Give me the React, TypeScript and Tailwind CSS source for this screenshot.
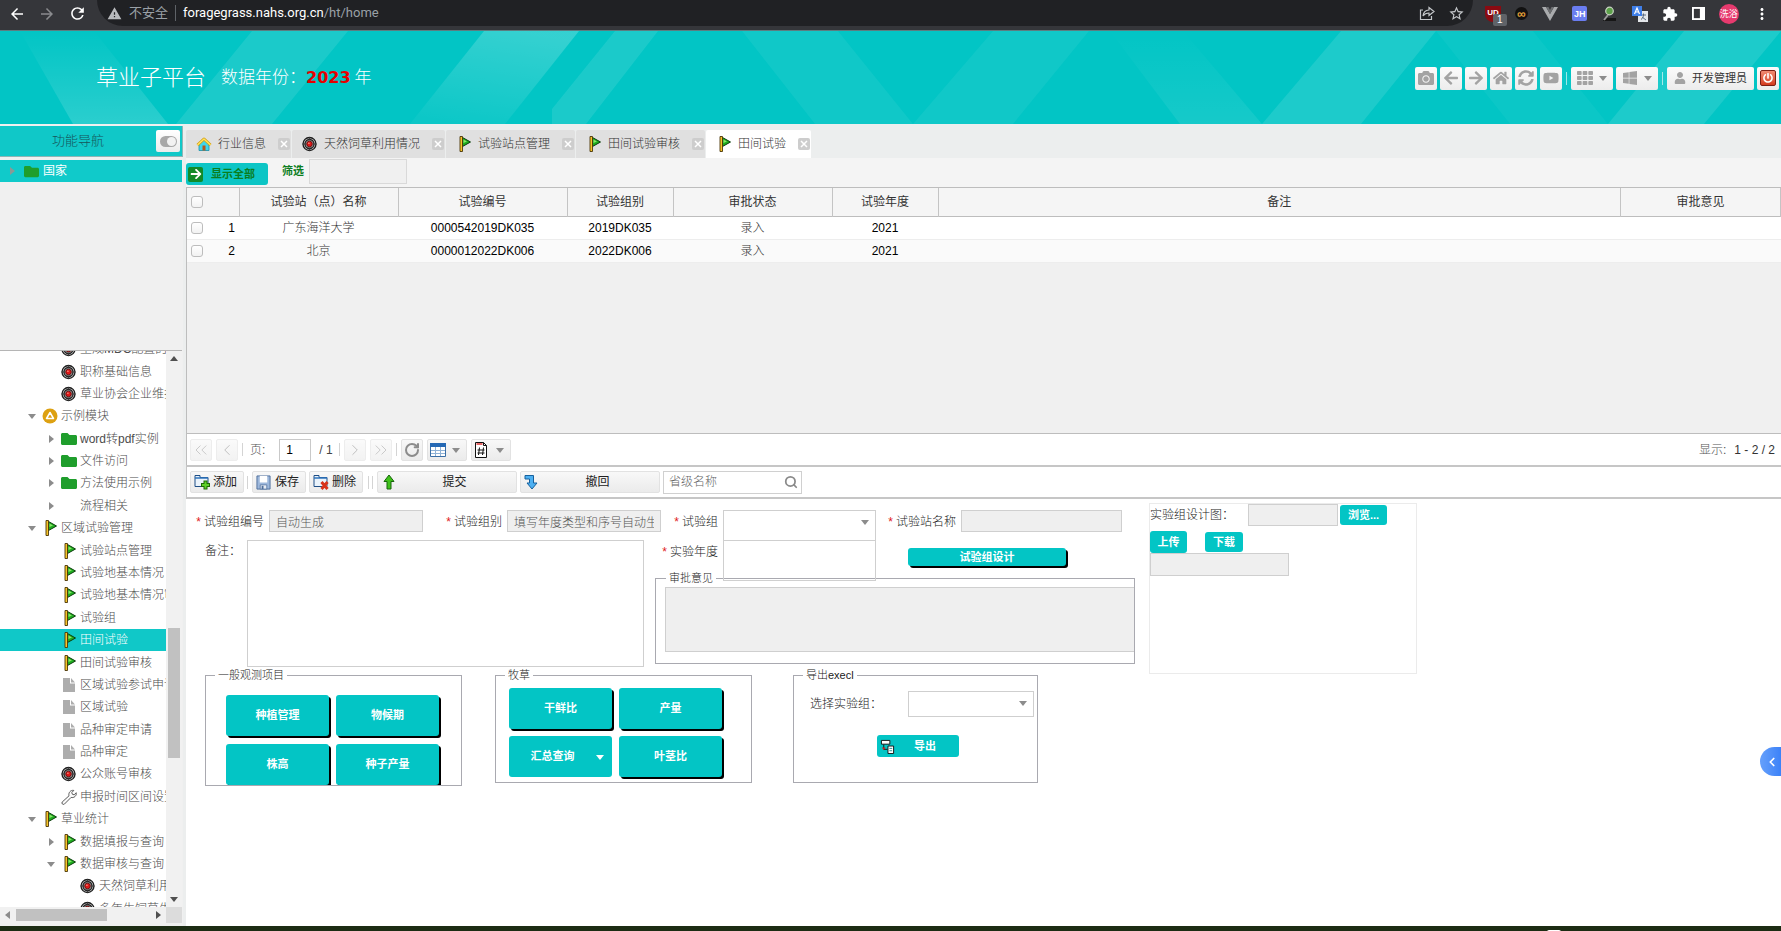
import type { ReactNode } from 'react';
import {
  FaArrowLeft,
  FaArrowRight,
  FaCamera,
  FaFolder,
  FaHome,
  FaPowerOff,
  FaSyncAlt,
  FaTh,
  FaUser,
  FaWindows,
  FaYoutube,
} from 'react-icons/fa';
import {
  MdArrowBack,
  MdArrowForward,
  MdExtension,
  MdMoreVert,
  MdRefresh,
  MdStarBorder,
  MdWarning,
} from 'react-icons/md';
import { ChevronLeft, ChevronRight, ChevronsLeft, ChevronsRight, RotateCw, Search } from 'lucide-react';

type IconName = 'flag' | 'target' | 'folder' | 'file' | 'wrench' | 'ring' | 'house' | 'none';

interface TreeNode {
  label: string;
  level: 1 | 2 | 3;
  icon: IconName;
  state?: 'open' | 'closed';
  active?: boolean;
}

const TREE: TreeNode[] = [
  { label: '生成MDC配置的', level: 2, icon: 'target' },
  { label: '职称基础信息', level: 2, icon: 'target' },
  { label: '草业协会企业维护', level: 2, icon: 'target' },
  { label: '示例模块', level: 1, icon: 'ring', state: 'open' },
  { label: 'word转pdf实例', level: 2, icon: 'folder', state: 'closed' },
  { label: '文件访问', level: 2, icon: 'folder', state: 'closed' },
  { label: '方法使用示例', level: 2, icon: 'folder', state: 'closed' },
  { label: '流程相关', level: 2, icon: 'none', state: 'closed' },
  { label: '区域试验管理', level: 1, icon: 'flag', state: 'open' },
  { label: '试验站点管理', level: 2, icon: 'flag' },
  { label: '试验地基本情况', level: 2, icon: 'flag' },
  { label: '试验地基本情况审核', level: 2, icon: 'flag' },
  { label: '试验组', level: 2, icon: 'flag' },
  { label: '田间试验', level: 2, icon: 'flag', active: true },
  { label: '田间试验审核', level: 2, icon: 'flag' },
  { label: '区域试验参试申请', level: 2, icon: 'file' },
  { label: '区域试验', level: 2, icon: 'file' },
  { label: '品种审定申请', level: 2, icon: 'file' },
  { label: '品种审定', level: 2, icon: 'file' },
  { label: '公众账号审核', level: 2, icon: 'target' },
  { label: '申报时间区间设置', level: 2, icon: 'wrench' },
  { label: '草业统计', level: 1, icon: 'flag', state: 'open' },
  { label: '数据填报与查询', level: 2, icon: 'flag', state: 'closed' },
  { label: '数据审核与查询', level: 2, icon: 'flag', state: 'open' },
  { label: '天然饲草利用情况', level: 3, icon: 'target' },
  { label: '多年生饲草生产', level: 3, icon: 'target' },
];

const INDENT = { 1: 'pl-[23px]', 2: 'pl-[42px]', 3: 'pl-[61px]' };

const TABS: { label: string; icon: IconName; active?: boolean }[] = [
  { label: '行业信息', icon: 'house' },
  { label: '天然饲草利用情况', icon: 'target' },
  { label: '试验站点管理', icon: 'flag' },
  { label: '田间试验审核', icon: 'flag' },
  { label: '田间试验', icon: 'flag', active: true },
];

const ROWS = [
  { name: '广东海洋大学', code: '0000542019DK035', group: '2019DK035', status: '录入', year: '2021' },
  { name: '北京', code: '0000012022DK006', group: '2022DK006', status: '录入', year: '2021' },
];

function Icon({ name }: { name: IconName }) {
  switch (name) {
    case 'flag':
      return (
        <svg viewBox="-2 0 16 16" className="size-4 shrink-0" aria-hidden>
          <path d="M4.500 1.500 12.500 6 4.500 10.500z" fill="#1fae1f" stroke="#0c3d0c" />
          <path d="M5.500 3.500 9 5.500 5.500 7z" fill="#8be36a" />
          <path d="M2 .5h2.500v15H2z" fill="#f7c52b" stroke="#4a3508" strokeWidth=".9" />
        </svg>
      );
    case 'target':
      return (
        <svg viewBox="0 0 16 16" className="size-4 shrink-0" fill="none" aria-hidden>
          <circle cx="7.500" cy="8" r="6.500" fill="#d0d0d0" stroke="#1c1c1c" strokeWidth="1.300" />
          <circle cx="7.500" cy="8" r="4.500" fill="#9c9c9c" stroke="#222" strokeWidth="1.300" />
          <circle cx="7.500" cy="8" r="2.800" fill="#e01818" stroke="#5a0808" strokeWidth=".8" />
          <path d="M7.500 1v3M7.500 12v3M.5 8h3M11.500 8h3" stroke="#333" strokeWidth=".8" />
          <circle cx="6.900" cy="7.200" r=".8" fill="#ff9c8c" />
        </svg>
      );
    case 'folder':
      return <FaFolder className="size-4 shrink-0 text-[#1f9e2c]" aria-hidden />;
    case 'file':
      return (
        <svg viewBox="0 0 16 16" className="size-4 shrink-0" aria-hidden>
          <path d="M2 1h7v5.500h5V15H2z" fill="#adadad" />
          <path d="M10 1l4 4.500h-4z" fill="#adadad" />
        </svg>
      );
    case 'wrench':
      return (
        <svg viewBox="0 0 16 16" className="size-4 shrink-0" fill="#fafafa" stroke="#5a5a5a" aria-hidden>
          <path d="M1.2 13 8 6.8C7.2 4 9.400 .8 12.800 1.400L10.800 3.600l.6 1.700 1.800.5 2-2.100c.7 3.100-2.300 5.600-5.100 4.700L3.300 15.200c-1.500.9-3-.8-2.100-2.200z" />
        </svg>
      );
    case 'ring':
      return (
        <svg viewBox="0 0 16 16" className="size-4 shrink-0" aria-hidden>
          <circle cx="8" cy="8" r="7.500" fill="#dda112" />
          <path d="M8 4.500 11.500 10.500h-7z" fill="none" stroke="#fff" strokeWidth="1.500" strokeLinejoin="round" />
        </svg>
      );
    case 'house':
      return (
        <svg viewBox="0 0 16 16" className="size-4 shrink-0" aria-hidden>
          <path d="M3 8v6.500h10V8L8 3.500z" fill="#3fd6ea" stroke="#1a8fa8" strokeWidth=".8" />
          <path d="M6.500 9.500h3v5h-3z" fill="#b5591c" />
          <path d="M1.500 9 8 3l6.500 6" fill="none" stroke="#d19a10" strokeWidth="3" strokeLinejoin="round" />
          <path d="M1.500 9 8 3l6.500 6" fill="none" stroke="#ffe45c" strokeWidth="1.600" strokeLinejoin="round" />
        </svg>
      );
    default:
      return <span className="size-4 shrink-0" />;
  }
}

function Caret({ dir = 'down', className = 'fill-[#8c8c8c]' }: { dir?: 'down' | 'right' | 'left' | 'up'; className?: string }) {
  const d = {
    down: 'M0 2h8L4 7z',
    up: 'M0 6h8L4 1z',
    right: 'M2 0v8l5-4z',
    left: 'M6 0v8L1 4z',
  }[dir];
  return (
    <svg viewBox="0 0 8 8" className={`size-2 shrink-0 ${className}`} aria-hidden>
      <path d={d} />
    </svg>
  );
}

function BrowserBar() {
  return (
    <div className="flex h-[31px] shrink-0 items-start border-b border-[#5c7d80] bg-[#35363a] text-white">
      <div className="flex h-[27px] w-[97px] shrink-0 items-center gap-3 pl-2">
        <MdArrowBack className="size-[18px]" />
        <MdArrowForward className="size-[18px] text-[#8a8b8e]" />
        <MdRefresh className="size-[19px]" />
      </div>
      <div className="flex h-[26px] flex-1 items-center rounded-b-full bg-[#202124] pr-2 pl-2.5 text-[13px]">
        <MdWarning className="size-[15px] text-[#b8babd]" />
        <span className="ml-[7px] text-[#9aa0a6]">不安全</span>
        <span className="mx-[7px] h-4 w-px bg-[#5f6368]" />
        <span className="font-['Roboto',sans-serif] text-[#9aa0a6]">
          <span className="text-white">foragegrass.nahs.org.cn</span>/ht/home
        </span>
        <svg viewBox="0 0 16 16" className="ml-auto size-4" fill="none" stroke="#c4c7ca" strokeWidth="1.200" aria-hidden>
          <path d="M4 5H1.500v9.500h11V11" />
          <path d="M4 11c.4-4 2.800-5.800 6-6V2.500L15 6.500l-5 4V8c-2.600 0-4.500.8-6 3z" />
        </svg>
        <MdStarBorder className="ml-[13px] size-[17px] text-[#c4c7ca]" />
      </div>
      <div className="flex h-[27px] w-[308px] shrink-0 items-center justify-between pr-2.5 pl-3">
        <span className="relative flex size-4 items-center justify-center rounded-b-full bg-[#8a0b12] text-[8px] font-bold">
          UD
          <span className="absolute top-2 left-2 rounded-xs bg-[#5f6368] px-1 text-[10px] leading-[12px] font-normal">1</span>
        </span>
        <span className="flex size-[13px] items-center justify-center rounded-full bg-[#111] text-[12px] leading-none font-bold text-[#e8a33a]">
          ∞
        </span>
        <svg viewBox="0 0 16 14" className="h-3.5 w-4" aria-hidden>
          <path d="M0 0h4l4 7 4-7h4L8 14z" fill="#a9abad" />
          <path d="M4 0h2.500L8 3l1.500-3H12L8 7z" fill="#6d6f72" />
        </svg>
        <span className="flex size-[15px] items-center justify-center rounded-xs bg-[#6a7df0] text-[9px] font-bold">JH</span>
        <svg viewBox="0 0 16 16" className="size-4" aria-hidden>
          <path d="M2 15c1-3 3-3 5-3h8v3z" fill="#161616" />
          <path d="m7 9-4 5" stroke="#9a9a9a" strokeWidth="2" />
          <circle cx="8.500" cy="5" r="3.800" fill="#5ca04a" stroke="#c9d4c4" strokeWidth="1.200" />
        </svg>
        <svg viewBox="0 0 16 16" className="size-4" aria-hidden>
          <path d="M6 5h10v11H6z" fill="#e4e7ea" />
          <path d="M9 9h5M11.500 7.500V9c0 2-1 3.500-2.500 4.500M10 11l4 3" stroke="#5a6b80" fill="none" />
          <path d="M0 0h10v10H0z" fill="#3f7fe8" />
          <path d="m2.500 8 2.500-6 2.500 6M3.500 6h3" stroke="#fff" strokeWidth="1.200" fill="none" />
        </svg>
        <MdExtension className="size-4" />
        <svg viewBox="0 0 14 14" className="size-[13px]" aria-hidden>
          <path d="M0 0h14v14H0z" fill="#fff" />
          <path d="M2 2h6.500v10H2z" fill="#35363a" />
        </svg>
        <span className="flex size-5 items-center justify-center rounded-full bg-[#e63a6e] text-[9px]">洗浴</span>
        <MdMoreVert className="size-[18px]" />
      </div>
    </div>
  );
}

function HeaderArt() {
  return (
    <svg viewBox="0 0 1781 93" preserveAspectRatio="none" className="absolute inset-0 size-full" fill="#fff" aria-hidden>
      <defs>
        <linearGradient id="fadeUp" x1="0" y1="1" x2="0" y2="0">
          <stop offset="0" stopColor="#fff" stopOpacity=".16" />
          <stop offset="1" stopColor="#fff" stopOpacity="0" />
        </linearGradient>
        <linearGradient id="fadeDown" x1=".6" y1="0" x2=".3" y2="1">
          <stop offset="0" stopColor="#fff" stopOpacity=".2" />
          <stop offset="1" stopColor="#fff" stopOpacity=".04" />
        </linearGradient>
      </defs>
      <path d="M20 0h74l74 93H73z" fill="url(#fadeUp)" />
      <path d="M252 0h96l-76 93h-96z" fillOpacity=".1" />
      <path d="M484 0h95l-74 93h-95z" fill="url(#fadeDown)" />
      <path d="M615 0h43l-72 93h-34V78z" fillOpacity=".1" />
      <path d="M742 0h96l75 93h-98z" fillOpacity=".06" />
      <path d="M993 0h96l-76 93H913z" fillOpacity=".06" />
      <path d="M1110 0h73l79 93h-82z" fill="url(#fadeUp)" fillOpacity=".5" />
      <path d="M1341 0h95l-75 93h-99z" fillOpacity=".11" />
      <path d="M1436 0h97l75 93h-98z" fillOpacity=".04" />
      <path d="M1684 0h97l-77 93h-96z" fillOpacity=".11" />
    </svg>
  );
}

const headBtn =
  'flex h-[23px] items-center justify-center rounded-xs bg-linear-to-b from-[#fbfbfb] to-[#ececec] text-[#a3a3a3]';

function Header() {
  const plain = [
    { icon: <FaCamera />, label: '截图' },
    { icon: <FaArrowLeft />, label: '后退' },
    { icon: <FaArrowRight />, label: '前进' },
    { icon: <FaHome />, label: '首页' },
    { icon: <FaSyncAlt />, label: '刷新' },
    { icon: <FaYoutube />, label: '视频' },
  ];
  return (
    <header className="relative h-[93px] shrink-0 bg-[#02c5c5]">
      <HeaderArt />
      <div className="relative flex h-full items-center pt-px pr-0.5 pl-[96px] text-white">
        <h1 className="text-[22px] font-light">草业子平台</h1>
        <p className="ml-[15px] flex items-center text-[17px] font-light">
          数据年份：
          <b className="font-['DejaVu_Sans',sans-serif] text-base font-bold text-[#e60000]">2023</b>
          <span className="ml-1">年</span>
        </p>
        <div className="ml-auto flex items-center gap-[3px] text-base">
          {plain.map((b) => (
            <button key={b.label} type="button" aria-label={b.label} className={`${headBtn} w-[22px]`}>
              {b.icon}
            </button>
          ))}
          <span className="mx-px h-[13px] w-px bg-white/60" />
          <button type="button" aria-label="应用" className={`${headBtn} w-[42px] gap-1.5`}>
            <FaTh />
            <Caret />
          </button>
          <button type="button" aria-label="窗口" className={`${headBtn} w-[42px] gap-1.5`}>
            <FaWindows />
            <Caret />
          </button>
          <span className="mx-px h-[13px] w-px bg-white/60" />
          <button type="button" className={`${headBtn} w-[87px] gap-1.5`}>
            <FaUser className="size-3" />
            <span className="text-[11px] text-[#333]">开发管理员</span>
          </button>
          <button type="button" aria-label="退出" className={`${headBtn} w-[22px]`}>
            <span className="flex size-4 items-center justify-center rounded-xs border border-[#7c1f14] bg-linear-to-b from-[#f08a72] to-[#d43a1c]">
              <FaPowerOff className="size-2.5 text-white" />
            </span>
          </button>
        </div>
      </div>
    </header>
  );
}

function Sidebar() {
  return (
    <aside className="flex w-[183px] shrink-0 flex-col bg-[#f0f0f0]">
      <div className="mt-0.5 flex h-[31px] items-center justify-between border-r border-b border-[#8fb5b5] bg-[#10c8c8] pr-0.5">
        <h2 className="flex-1 pl-[52px] text-[13px] font-light text-[#17555a]">功能导航</h2>
        <button
          type="button"
          aria-label="切换导航"
          className="flex h-[22px] w-6 items-center justify-center rounded-xs bg-linear-to-b from-white to-[#ececec]"
        >
          <span className="flex h-[11px] w-[17px] items-center justify-end rounded-full bg-[#a8a8a8] pr-px">
            <span className="size-[9px] rounded-full bg-[#f2f2f2]" />
          </span>
        </button>
      </div>
      <div className="mt-[3px] mr-px flex h-[22px] items-center bg-[#10caca] pl-2 text-white">
        <Caret dir="right" className="fill-[#8a9a96]" />
        <FaFolder className="ml-2 size-[15px] text-[#1f9e2c]" />
        <span className="ml-1">国家</span>
      </div>
      <div className="mr-px flex flex-1 flex-col pt-[168px]">
        <div className="flex flex-1 overflow-hidden border-t border-[#b5b5b5]">
          <div className="h-[556px] flex-1 overflow-hidden bg-white">
            <ul className="-mt-[13px] grid h-[582px] auto-rows-fr">
              {TREE.map((n) => (
                <li
                  key={n.label}
                  className={`flex items-center whitespace-nowrap ${INDENT[n.level]} ${n.active ? 'bg-[#10c8c8] text-white' : 'text-[#4c4c4c]'}`}
                >
                  <span className="flex w-[19px] shrink-0 justify-center pr-0.5">
                    {n.state && <Caret dir={n.state === 'open' ? 'down' : 'right'} />}
                  </span>
                  <Icon name={n.icon} />
                  <span className="ml-[3px] font-light">{n.label}</span>
                </li>
              ))}
            </ul>
          </div>
          <div className="flex w-4 flex-col items-center bg-[#f1f1f1] py-1">
            <Caret dir="up" className="fill-[#505050]" />
            <span className="mt-auto h-[130px] w-3 bg-[#c1c1c1]" />
            <Caret dir="down" className="mt-[137px] fill-[#505050]" />
          </div>
        </div>
        <div className="mb-[3px] flex h-4 items-center bg-[#f1f1f1]">
          <span className="flex w-4 justify-center">
            <Caret dir="left" />
          </span>
          <span className="h-3 w-[91px] bg-[#c1c1c1]" />
          <span className="ml-auto flex w-4 justify-center">
            <Caret dir="right" className="fill-[#505050]" />
          </span>
          <span className="h-4 w-4 bg-[#dcdcdc]" />
        </div>
      </div>
    </aside>
  );
}

function TabBar() {
  return (
    <nav className="flex h-[34px] shrink-0 items-end gap-px bg-[#eceeee]">
      {TABS.map((t) => (
        <div
          key={t.label}
          className={`flex h-7 items-center rounded-t-xs pr-px pl-2.5 ${t.active ? 'bg-white' : 'bg-[#e0e0e0]'}`}
        >
          <Icon name={t.icon} />
          <a href="#" className="mr-3 ml-1.5 font-light text-[#333]">
            {t.label}
          </a>
          <button
            type="button"
            aria-label={`关闭${t.label}`}
            className="flex size-3 items-center justify-center rounded-xs bg-[#cdcdcd]"
          >
            <svg viewBox="0 0 8 8" className="size-2" stroke="#fff" strokeWidth="1.500" aria-hidden>
              <path d="m1 1 6 6M7 1 1 7" />
            </svg>
          </button>
        </div>
      ))}
    </nav>
  );
}

const th = 'border-r border-[#c4c4c4] font-normal';
const tick =
  'block size-3 appearance-none rounded-[3px] border border-[#bdbdbd] bg-linear-to-b from-white to-[#f2f2f2]';

function DataGrid() {
  return (
    <div className="h-[246px] shrink-0 border-t border-l border-[#bdbdbd] bg-[#f0f0f0]">
      <table className="w-full table-fixed border-collapse text-center">
        <colgroup>
          <col className="w-[52px]" />
          <col className="w-[159px]" />
          <col className="w-[169px]" />
          <col className="w-[106px]" />
          <col className="w-[159px]" />
          <col className="w-[106px]" />
          <col />
          <col className="w-[160px]" />
        </colgroup>
        <thead>
          <tr className="h-7 border-b border-[#bdbdbd] bg-[#f5f5f5] text-[#333]">
            <th className={`${th} pl-1`}>
              <input type="checkbox" aria-label="全选" className={tick} />
            </th>
            <th className={th}>试验站（点）名称</th>
            <th className={th}>试验编号</th>
            <th className={th}>试验组别</th>
            <th className={th}>审批状态</th>
            <th className={th}>试验年度</th>
            <th className={th}>备注</th>
            <th className={th}>审批意见</th>
          </tr>
        </thead>
        <tbody>
          {ROWS.map((r, i) => (
            <tr key={r.code} className="h-[23px] border-b border-[#ededed] bg-white text-black even:bg-[#fafafa]">
              <td className="pl-1">
                <div className="flex items-center justify-between pr-1">
                  <input type="checkbox" aria-label={`选择第${i + 1}行`} className={tick} />
                  {i + 1}
                </div>
              </td>
              <td className="font-light text-[#333]">{r.name}</td>
              <td>{r.code}</td>
              <td>{r.group}</td>
              <td className="font-light text-[#333]">{r.status}</td>
              <td>{r.year}</td>
              <td />
              <td />
            </tr>
          ))}
        </tbody>
      </table>
    </div>
  );
}

const toolBtn =
  'flex h-[22px] shrink-0 items-center rounded-xs border border-[#e2e2e2] bg-linear-to-b from-[#f8f8f8] to-[#ebebeb] text-[#222]';

function Divider() {
  return <span className="h-[13px] w-px shrink-0 bg-[#d4d4d4]" />;
}

function Pager() {
  const ghost = `${toolBtn} w-[22px] justify-center opacity-60`;
  return (
    <div className="flex h-8 shrink-0 items-center gap-1 border-t border-l border-[#bdbdbd] bg-white pr-1.5 pl-[3px]">
      <button type="button" aria-label="首页" className={ghost}>
        <ChevronsLeft className="size-5 stroke-1 text-[#999]" />
      </button>
      <button type="button" aria-label="上一页" className={ghost}>
        <ChevronLeft className="size-[18px] stroke-1 text-[#777]" />
      </button>
      <Divider />
      <label htmlFor="page" className="ml-[3px] font-light text-[#555]">
        页:
      </label>
      <input id="page" defaultValue="1" className="ml-2.5 h-[22px] w-8 border border-[#c9c9c9] pl-1.5 text-black" />
      <span className="mr-0.5 ml-1 text-[#444]">/ 1</span>
      <Divider />
      <button type="button" aria-label="下一页" className={ghost}>
        <ChevronRight className="size-[18px] stroke-1 text-[#777]" />
      </button>
      <button type="button" aria-label="末页" className={ghost}>
        <ChevronsRight className="size-5 stroke-1 text-[#999]" />
      </button>
      <Divider />
      <button type="button" aria-label="刷新" className={`${toolBtn} w-[22px] justify-center`}>
        <RotateCw className="size-4 stroke-3 text-[#8c8c8c]" />
      </button>
      <button type="button" aria-label="列设置" className={`${toolBtn} w-10 gap-1.5 pl-0.5`}>
        <svg viewBox="0 0 16 14" className="h-3.5 w-4" aria-hidden>
          <path d="M.5.5h15v13H.5z" fill="#fff" stroke="#3a6ea5" />
          <path d="M0 0h16v4H0z" fill="#2468b4" />
          <path d="M1 7.500h14M1 10.500h14M5.500 4v9M10.500 4v9" stroke="#8fb2d6" />
        </svg>
        <Caret />
      </button>
      <button type="button" aria-label="行号" className={`${toolBtn} w-10 gap-2 pl-0.5`}>
        <svg viewBox="0 0 14 16" className="h-4 w-3.5" aria-hidden>
          <path d="M1.500.5h8l3 3v12h-11z" fill="#fff" stroke="#111" />
          <path d="M9.500.5v3h3" fill="none" stroke="#111" />
          <path d="M2.500 2h6" stroke="#d33" strokeWidth="1.500" />
          <path d="M5.500 5.500 4.500 13M9.500 5.500l-1 7.500M3.500 8h7M3.500 11h7" stroke="#111" />
        </svg>
        <Caret />
      </button>
      <span className="ml-auto text-[#333]">
        <span className="mr-2 font-light text-[#555]">显示:</span>1 - 2 / 2
      </span>
    </div>
  );
}

function FormIcon({ kind }: { kind: 'add' | 'del' }) {
  return (
    <svg viewBox="0 0 16 16" className="size-4" aria-hidden>
      <path d="M1 12.500v-11h5v2h8v9z" fill="#eaf3fb" stroke="#1f4e86" />
      <path d="M1 4h13" stroke="#2f74bd" strokeWidth="1.500" />
      {kind === 'add' ? (
        <>
          <path d="M11.500 6.500v9M7 11h9" stroke="#1d6a06" strokeWidth="4" />
          <path d="M11.500 7.500v7M8 11h7" stroke="#5ed02a" strokeWidth="2" />
        </>
      ) : (
        <path d="m8.500 8 6 7M14.500 8l-6 7" stroke="#d8321a" strokeWidth="3" />
      )}
    </svg>
  );
}

function Toolbar() {
  return (
    <div className="flex h-[34px] shrink-0 items-center border-t-2 border-b-2 border-l border-[#c6c6c6] bg-white pl-[3px]">
      <button type="button" className={`${toolBtn} w-[54px] gap-[3px] pl-[3px]`}>
        <FormIcon kind="add" />
        添加
      </button>
      <span className="mr-1 ml-[3px] flex">
        <Divider />
      </span>
      <button type="button" className={`${toolBtn} w-[54px] gap-1 pl-[3px]`}>
        <svg viewBox="0 0 16 16" className="size-[15px]" aria-hidden>
          <path d="M1 1h14v14H1z" fill="#9db8dc" stroke="#4f6f9c" />
          <path d="M4 1h8v7H4z" fill="#fff" />
          <path d="M4.500 10.500h7V15h-7z" fill="#e8edf4" stroke="#4f6f9c" strokeWidth=".8" />
          <path d="M6 11.500h2V15H6z" fill="#4f6f9c" />
        </svg>
        保存
      </button>
      <button type="button" className={`${toolBtn} ml-[3px] w-[54px] gap-[3px] pl-[3px]`}>
        <FormIcon kind="del" />
        删除
      </button>
      <span className="mr-1 ml-[5px] flex gap-[3px]">
        <Divider />
        <Divider />
      </span>
      <button type="button" className={`${toolBtn} w-[140px] pl-[3px]`}>
        <svg viewBox="0 0 16 16" className="size-4" aria-hidden>
          <path d="M8 1 13 7.500h-3V15H6V7.500H3z" fill="#3fc21a" stroke="#16640a" />
        </svg>
        <span className="flex-1 pr-1">提交</span>
      </button>
      <button type="button" className={`${toolBtn} ml-[3px] w-[140px] pl-[3px]`}>
        <svg viewBox="0 0 16 16" className="size-4" aria-hidden>
          <path d="M1 1.500h8.500V9H13l-5 6-5-6h2.500V5H1z" fill="#4db0f2" stroke="#17609c" />
        </svg>
        <span className="flex-1 pr-1">撤回</span>
      </button>
      <label className="ml-[3px] flex h-[23px] w-[139px] items-center border border-[#d0d0d0] pr-[3px] pl-[5px]">
        <input type="search" placeholder="省级名称" aria-label="省级名称" className="w-full font-light outline-none placeholder:text-[#666]" />
        <Search className="size-3.5 shrink-0 stroke-3 text-[#8a8a8a]" />
      </label>
    </div>
  );
}

function FieldLabel({ id, children, className }: { id: string; children: ReactNode; className: string }) {
  return (
    <label htmlFor={id} className={`flex shrink-0 justify-end gap-[3px] pr-[5px] font-light text-[#222] ${className}`}>
      <span className="font-normal text-[#e02020]">*</span>
      {children}
    </label>
  );
}

const greyInput = 'border border-[#cfcfcf] bg-[#efefef] px-1.5 font-light text-[#555]';
const teal = 'flex items-center justify-center rounded-[3px] bg-[#03c5c5] text-[11px] font-bold text-white';
const raised = `${teal} shadow-[2px_2px_0_#000]`;
const box = 'shrink-0 border border-[#a9a9b0]';
const legend = 'px-[3px] text-[11px] leading-[14px] font-light text-[#222]';

function Picker({ id, className }: { id: string; className: string }) {
  return (
    <span className={`relative shrink-0 ${className}`}>
      <select id={id} className="size-full appearance-none border border-[#cfcfcf] bg-white" />
      <span className="pointer-events-none absolute top-0 right-[7px] flex h-6 items-center">
        <Caret />
      </span>
    </span>
  );
}

function TrialForm() {
  return (
    <form className="flex flex-1 items-start bg-white">
      <div className="w-[949px] shrink-0 pt-[11px] pl-px">
        <div className="flex h-[30px]">
          <FieldLabel id="code" className="w-[82px] pt-1">试验组编号</FieldLabel>
          <input id="code" readOnly value="自动生成" className={`${greyInput} h-[22px] w-[154px]`} />
          <FieldLabel id="group" className="w-[84px] pt-1">试验组别</FieldLabel>
          <input id="group" readOnly value="填写年度类型和序号自动生成" className={`${greyInput} h-[22px] w-[154px]`} />
          <FieldLabel id="trial" className="w-[62px] pt-1">试验组</FieldLabel>
          <Picker id="trial" className="h-[31px] w-[153px]" />
          <FieldLabel id="station" className="w-[85px] pt-1">试验站名称</FieldLabel>
          <input id="station" readOnly className={`${greyInput} h-[22px] w-[161px]`} />
        </div>
        <div className="flex h-32">
          <label htmlFor="remark" className="w-[60px] shrink-0 pt-[3px] pl-[18px] font-light text-[#222]">
            备注：
          </label>
          <textarea id="remark" className="h-[127px] w-[397px] shrink-0 resize-none border border-[#cfcfcf]" />
          <div className="pl-[11px]">
            <div className="flex h-[31px]">
              <FieldLabel id="year" className="w-[68px] pt-1">实验年度</FieldLabel>
              <input id="year" className="h-[41px] w-[153px] border border-[#cfcfcf] px-1.5" />
              <button type="button" className={`${raised} mt-2 ml-8 h-[18px] w-[158px]`}>
                试验组设计
              </button>
            </div>
            <fieldset className={`${box} h-[93px] w-[480px] pl-[9px]`}>
              <legend className={`${legend} ml-px`}>审批意见</legend>
              <textarea aria-label="审批意见" readOnly className="mt-0.5 block h-[65px] w-full resize-none border border-r-0 border-[#cfcfcf] bg-[#efefef]" />
            </fieldset>
          </div>
        </div>
        <div className="flex items-start pl-[18px]">
          <fieldset className={`${box} w-[257px]`}>
            <legend className={`${legend} ml-[9px]`}>一般观测项目</legend>
            <div className="grid h-[103px] grid-cols-[103px_103px] gap-[7px] overflow-hidden pt-[13px] pl-5">
              <button type="button" className={`${raised} h-[41px]`}>种植管理</button>
              <button type="button" className={`${raised} h-[41px]`}>物候期</button>
              <button type="button" className={`${raised} h-[41px]`}>株高</button>
              <button type="button" className={`${raised} h-[41px]`}>种子产量</button>
            </div>
          </fieldset>
          <fieldset className={`${box} ml-[33px] w-[257px]`}>
            <legend className={`${legend} ml-[9px]`}>牧草</legend>
            <div className="grid grid-cols-[103px_103px] gap-[7px] pt-1.5 pb-[5px] pl-[13px]">
              <button type="button" className={`${raised} h-[41px]`}>干鲜比</button>
              <button type="button" className={`${raised} h-[41px]`}>产量</button>
              <button type="button" className={`${teal} h-[41px] pr-2`}>
                <span className="flex-1">汇总查询</span>
                <Caret className="fill-white" />
              </button>
              <button type="button" className={`${raised} h-[41px]`}>叶茎比</button>
            </div>
          </fieldset>
          <fieldset className={`${box} ml-[41px] h-[115px] w-[245px]`}>
            <legend className={`${legend} ml-[9px]`}>导出execl</legend>
            <div className="mt-[9px] flex items-center justify-between pr-[3px] pl-4">
              <label htmlFor="exportGroup" className="font-light text-[#222]">
                选择实验组：
              </label>
              <Picker id="exportGroup" className="h-[26px] w-[126px]" />
            </div>
            <button type="button" className={`${teal} mt-[18px] ml-[83px] h-[22px] w-[82px] pr-3 pl-[3px]`}>
              <svg viewBox="0 0 16 16" className="size-[15px]" aria-hidden>
                <path d="M1.500 1.500h9v4h-9z" fill="#fff" stroke="#111" />
                <path d="M4 6v5h4" fill="none" stroke="#111" />
                <path d="m2 9 2 3 2-3z" fill="#c22" />
                <path d="M8.500 7.500h6v8h-6z" fill="#fff" stroke="#111" />
                <path d="M10 10h3M10 12.500h3" stroke="#1f8f8f" />
              </svg>
              <span className="flex-1 pl-2">导出</span>
            </button>
          </fieldset>
        </div>
      </div>
      <div className="mt-1 ml-[14px] h-[171px] w-[268px] shrink-0 border border-[#ebebeb]">
        <div className="flex items-start">
          <label htmlFor="design" className="w-[98px] pt-[3px] font-light text-[#222]">
            实验组设计图：
          </label>
          <input id="design" readOnly className={`${greyInput} h-[22px] w-[90px]`} />
          <button type="button" className={`${teal} mt-px ml-0.5 h-5 w-[47px]`}>浏览...</button>
        </div>
        <div className="mt-[5px] flex items-center gap-[18px]">
          <button type="button" className={`${teal} h-[22px] w-[37px]`}>上传</button>
          <button type="button" className={`${teal} h-5 w-[38px]`}>下载</button>
        </div>
        <input readOnly aria-label="文件名" className={`${greyInput} block h-[23px] w-[139px]`} />
      </div>
    </form>
  );
}

export default function App() {
  return (
    <div className="flex min-h-screen flex-col bg-[#eceeee] font-['Liberation_Sans','Noto_Sans_CJK_SC',sans-serif] text-xs text-black">
      <BrowserBar />
      <Header />
      <div className="flex flex-1">
        <Sidebar />
        <main className="flex min-w-0 flex-1 flex-col pl-[3px]">
          <TabBar />
          <div className="flex h-[29px] shrink-0 items-start bg-[#f4f4f4] font-bold text-[#0b7d1e]">
            <button type="button" className="mt-[5px] flex h-[22px] w-[82px] items-center rounded-[3px] bg-[#0cc5c5] pl-0.5">
              <span className="flex size-[15px] items-center justify-center rounded-xs bg-[#128a28] text-white">
                <FaArrowRight className="size-3" />
              </span>
              <span className="ml-2 text-[11px]">显示全部</span>
            </button>
            <label htmlFor="filter" className="mt-1.5 ml-3.5 text-[11px]">
              筛选
            </label>
            <input id="filter" className="mt-px ml-[5px] h-[25px] w-[98px] border border-[#d9d9d9] bg-[#f0f0f0] px-1 font-normal text-black" />
          </div>
          <DataGrid />
          <Pager />
          <Toolbar />
          <TrialForm />
        </main>
      </div>
      <footer className="flex h-1.5 shrink-0 items-end justify-end bg-[#1c2c13] pr-[220px]">
        <span className="h-0.5 w-3.5 rounded-t-sm bg-white" />
      </footer>
      <button
        type="button"
        aria-label="展开侧栏"
        className="fixed right-0 bottom-[155px] flex h-[29px] w-[21px] items-center justify-end rounded-l-full bg-linear-to-r from-[#66a0fb] to-[#3c82f8] pr-0.5 text-white"
      >
        <ChevronLeft className="size-3.5 stroke-3" />
      </button>
    </div>
  );
}
